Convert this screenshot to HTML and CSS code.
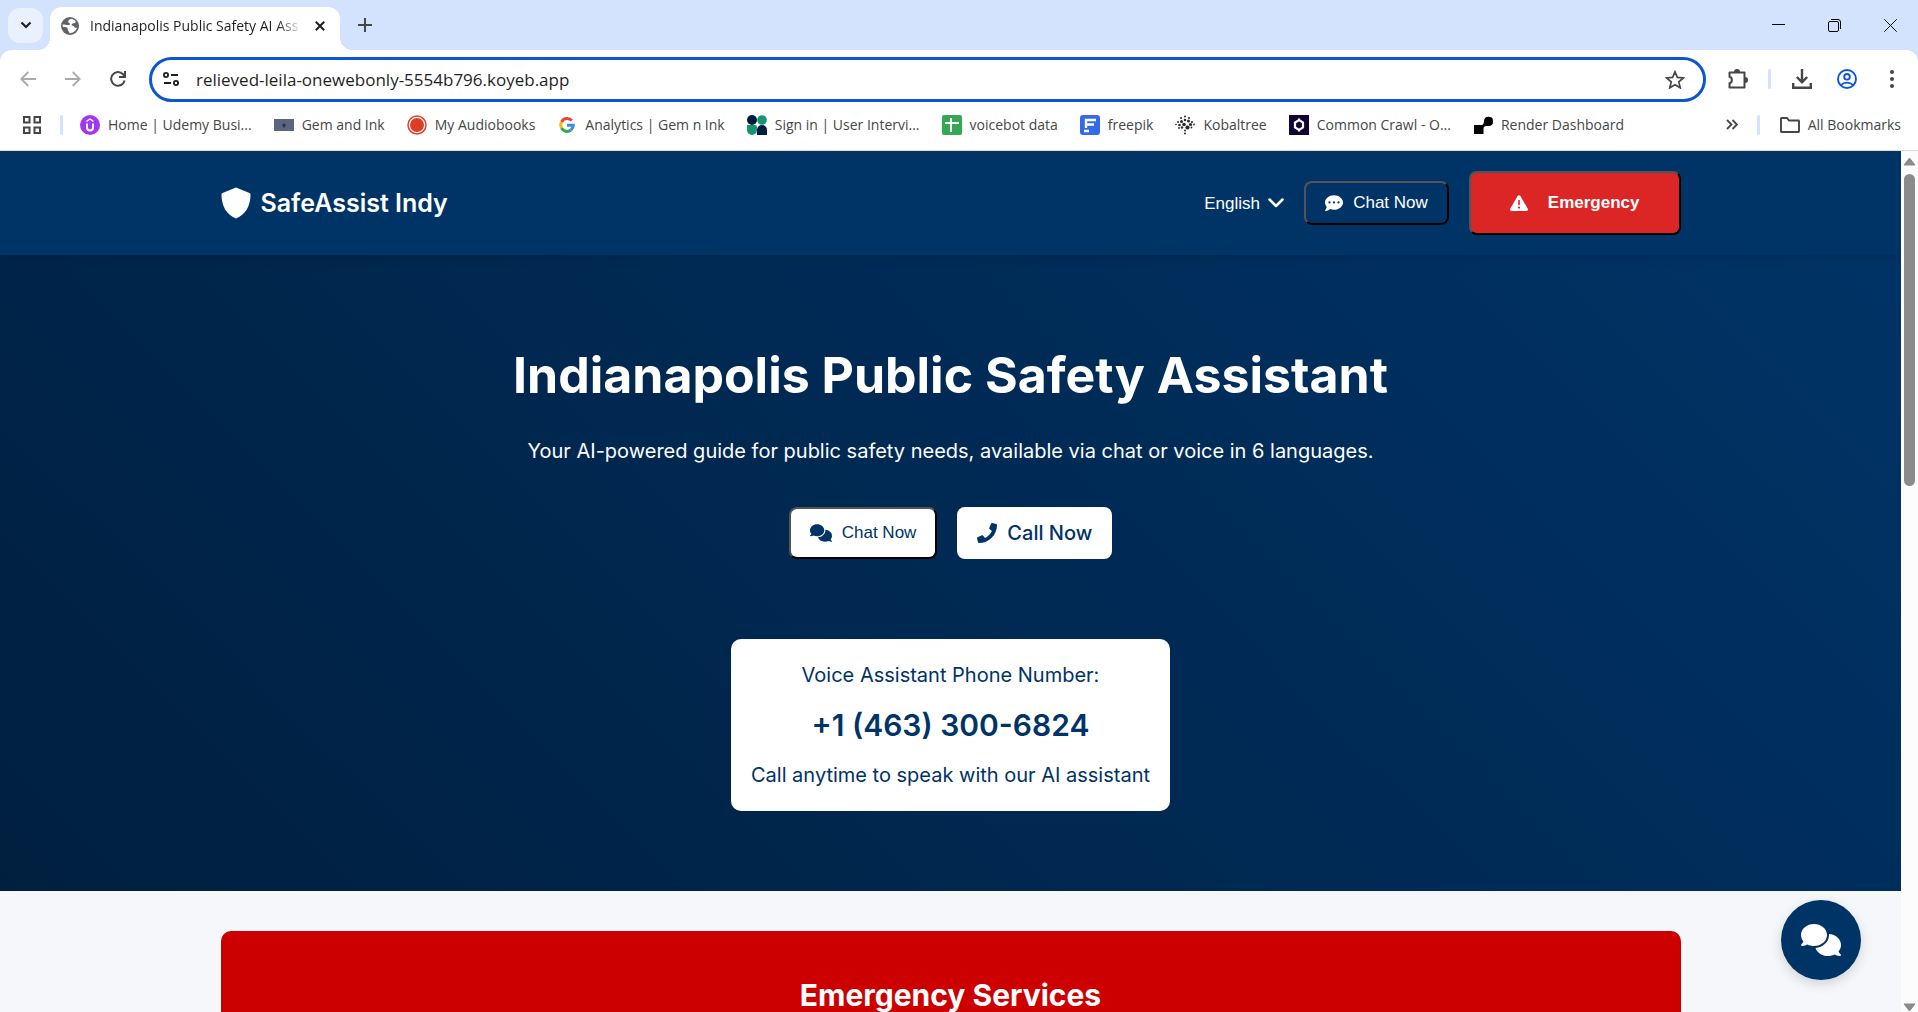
FILE: index.html
```html
<!DOCTYPE html>
<html lang="en">
<head>
  <meta charset="UTF-8">
  <title>Indianapolis Public Safety AI Assistant</title>
  <link rel="stylesheet" href="styles.css">
</head>
<body>

  <!-- Tab strip -->
  <div class="tabstrip">
    <button class="tab-search" aria-label="Search tabs">
      <svg width="12" height="8" viewBox="0 0 12 8"><path d="M1.500 1.500L6 6l4.500-4.500" fill="none" stroke="#1f1f1f" stroke-width="2.200"/></svg>
    </button>
    <div class="tab">
      <svg class="tab-icon" width="18" height="18" viewBox="0 0 18 18">
        <circle cx="9" cy="9" r="9" fill="#5f6368"/>
        <path d="M10.500 1.800c-2 .6-3.300 1.200-3.300 2.700 0 1.700 2 1.300 2 2.600 0 1-1.500.9-2.700 1-1.700.1-2.300-.6-4.700-.8-.2 1.200-.1 2 .1 2.800 1.400 0 3.600-.2 4.500.8 1 1.100-.2 2 .8 3 .6.600 1.200.8 1.200 2.300 4 0 6.700-2.400 7.500-5.400-1.200.4-2.200 0-2.700-1-.6-1.300-2.400-.8-2.600-2 0-1.200 1.200-1.500 2.600-1.600 1.200-.1 1.500-1 1.400-2-1-1.200-2.300-2-4.100-2.400z" fill="#fff"/>
      </svg>
      <span class="tab-title">Indianapolis Public Safety AI Ass</span>
      <button class="tab-close" aria-label="Close tab">
        <svg width="10" height="10" viewBox="0 0 10 10"><path d="M.8.8l8.400 8.400M9.200.8L.8 9.200" stroke="#1f1f1f" stroke-width="2"/></svg>
      </button>
    </div>
    <button class="new-tab" aria-label="New tab">
      <svg width="14" height="14" viewBox="0 0 14 14"><path d="M7 0v14M0 7h14" stroke="#444746" stroke-width="2"/></svg>
    </button>
    <div class="window-buttons">
      <button aria-label="Minimize"><svg width="13" height="13" viewBox="0 0 13 13"><path d="M0 5.500h13" stroke="#000"/></svg></button>
      <button aria-label="Restore"><svg width="13" height="13" viewBox="0 0 13 13" fill="none" stroke="#000"><rect x=".5" y="2.500" width="10" height="10" rx="1.500"/><path d="M3 .5h7a2.500 2.500 0 0 1 2.500 2.500v7"/></svg></button>
      <button aria-label="Close"><svg width="13" height="13" viewBox="0 0 13 13"><path d="M.3.3l12.400 12.400M12.700.3L.3 12.700" stroke="#000"/></svg></button>
    </div>
  </div>

  <!-- Toolbar -->
  <div class="toolbar">
    <button class="tool" aria-label="Back"><svg width="16" height="16" viewBox="0 0 16 16" fill="none" stroke="#ababab" stroke-width="1.800"><path d="M16 8H1.500M8.300 1L1.300 8l7 7"/></svg></button>
    <button class="tool" aria-label="Forward"><svg width="16" height="16" viewBox="0 0 16 16" fill="none" stroke="#ababab" stroke-width="1.800"><path d="M0 8h14.500M7.700 1l7 7-7 7"/></svg></button>
    <button class="tool" aria-label="Reload"><svg width="16" height="16" viewBox="0 0 16 16" fill="none" stroke="#444746" stroke-width="2"><path d="M14.600 9.500A6.800 6.800 0 1 1 13 3.300l1.700 1.900M15 0v6H9"/></svg></button>
    <form class="omnibox">
      <svg width="16" height="14" viewBox="0 0 16 14" fill="none" stroke="#1f1f1f" stroke-width="1.800"><circle cx="3" cy="3" r="2.100"/><path d="M8 3h7M1 11h7"/><circle cx="13" cy="11" r="2.100"/></svg>
      <input type="text" aria-label="Address" value="relieved-leila-onewebonly-5554b796.koyeb.app">
      <button type="button" class="star" aria-label="Bookmark this tab"><svg width="20" height="19" viewBox="0 0 20 19"><path d="M10 1.800l2.400 5.600 6 .5-4.600 4 1.400 5.900L10 14.700l-5.200 3.100 1.400-5.900-4.600-4 6-.5z" fill="none" stroke="#444746" stroke-width="1.700"/></svg></button>
    </form>
    <button class="tool extensions" aria-label="Extensions"><svg width="22" height="22" viewBox="0 0 22 22"><path d="M2.500 4.500h15v15h-15v-4.300c3.200-.4 3.200-6 0-6.400z" fill="none" stroke="#444746" stroke-width="2" stroke-linejoin="round"/><path d="M7 4a3 3 0 0 1 6 0zM18 9a3 3 0 0 1 0 6z" fill="#444746"/></svg></button>
    <span class="divider"></span>
    <button class="tool" aria-label="Downloads"><svg width="20" height="20" viewBox="0 0 20 20" fill="none" stroke="#444746" stroke-width="2.400"><path d="M10 0v12.500M4.800 8l5.200 5.200L15.200 8M1.200 14v4.800h17.600V14"/></svg></button>
    <button class="tool" aria-label="Profile"><svg width="20" height="20" viewBox="0 0 20 20" fill="none" stroke="#0b57d0" stroke-width="1.900"><circle cx="10" cy="10" r="9"/><circle cx="10" cy="7.800" r="2.800"/><path d="M3.800 16.200c3.400-3.400 9-3.400 12.400 0"/></svg></button>
    <button class="tool" aria-label="Menu"><svg width="4" height="18" viewBox="0 0 4 18" fill="#444746"><circle cx="2" cy="2" r="2"/><circle cx="2" cy="9" r="2"/><circle cx="2" cy="16" r="2"/></svg></button>
  </div>

  <!-- Bookmarks bar -->
  <div class="bookmarks">
    <button class="apps" aria-label="Apps"><svg width="18" height="18" viewBox="0 0 18 18" fill="none" stroke="#444746" stroke-width="2"><path d="M1 1h5.500v5.500H1zM11.500 1H17v5.500h-5.500zM1 11.500h5.500V17H1zM11.500 11.500H17V17h-5.500z"/></svg></button>
    <span class="divider"></span>
    <nav class="bookmark-list">
      <a href="#"><svg width="20" height="20" viewBox="0 0 20 20"><circle cx="10" cy="10" r="10" fill="#a435f0"/><path d="M6.500 6.300L10 4l3.500 2.300" fill="none" stroke="#fff" stroke-width="1.400"/><path d="M7 8.500v4a3 3 0 0 0 6 0v-4" fill="none" stroke="#fff" stroke-width="2"/></svg>Home | Udemy Busi...</a>
      <a href="#"><svg width="20" height="20" viewBox="0 0 20 20"><path d="M0 4h20v12H0z" fill="#5c6580"/><path d="M10 8l2 2-2 3-2-3z" fill="#2c3450"/></svg>Gem and Ink</a>
      <a href="#"><svg width="20" height="20" viewBox="0 0 20 20"><circle cx="10" cy="10" r="9" fill="#fff" stroke="#d9442d" stroke-width="1.500"/><circle cx="10" cy="10" r="7" fill="#dc3e24"/></svg>My Audiobooks</a>
      <a href="#"><svg width="20" height="20" viewBox="0 0 20 20" fill="none" stroke-width="3"><path d="M14.800 5.500A6.300 6.300 0 0 0 4.500 7" stroke="#ea4335"/><path d="M4.500 7a6.500 6.500 0 0 0 0 6" stroke="#fbbc05"/><path d="M4.500 13a6.300 6.300 0 0 0 9.500 2" stroke="#34a853"/><path d="M14 15a6.500 6.500 0 0 0 2.300-4.700H10" stroke="#4285f4"/></svg>Analytics | Gem n Ink</a>
      <a href="#"><svg width="20" height="20" viewBox="0 0 20 20"><circle cx="5" cy="5" r="5" fill="#001c3d"/><circle cx="15" cy="5" r="4.800" fill="#159570"/><path d="M0 10h8q2 0 2 2v3a5 5 0 0 1-10 0z" fill="#159570"/><path d="M10 20v-5a5 5 0 0 1 10 0v5z" fill="#001c3d"/></svg>Sign in | User Intervi...</a>
      <a href="#"><svg width="20" height="20" viewBox="0 0 20 20"><rect width="20" height="20" rx="2" fill="#34a853"/><path d="M9 3v14M3 8h14" stroke="#fff" stroke-width="2"/></svg>voicebot data</a>
      <a href="#"><svg width="20" height="20" viewBox="0 0 20 20"><rect width="20" height="20" rx="3" fill="#336aea"/><path d="M6 13V5h10M6 9.500h8M4 16h5" fill="none" stroke="#fff" stroke-width="2.400"/></svg>freepik</a>
      <a href="#"><svg width="20" height="20" viewBox="0 0 20 20" fill="#2a2a2a"><circle cx="10" cy="1.500" r="1"/><circle cx="6" cy="3" r="1"/><circle cx="14" cy="3" r="1"/><circle cx="10" cy="5" r="1.300"/><circle cx="6.500" cy="6.500" r="1.500"/><circle cx="13.500" cy="6" r="1.500"/><circle cx="3" cy="7" r="1"/><circle cx="17" cy="7" r="1.100"/><circle cx="1" cy="9.500" r=".8"/><circle cx="4.500" cy="10" r="1.300"/><circle cx="9" cy="9.500" r="1.800"/><circle cx="15.500" cy="9.500" r="1.600"/><circle cx="19" cy="9.500" r=".9"/><circle cx="7" cy="12.500" r="1.200"/><circle cx="12.500" cy="12.500" r="2.100"/><circle cx="4" cy="13" r=".9"/><circle cx="16.500" cy="12.500" r=".9"/><circle cx="10" cy="15.500" r="1"/><circle cx="10" cy="18.500" r="1"/></svg>Kobaltree</a>
      <a href="#"><svg width="20" height="20" viewBox="0 0 20 20"><path d="M0 0h20v20H0z" fill="#110333"/><path d="M10 5l4 2.500v5L10 15l-4-2.500v-5z" fill="none" stroke="#fff" stroke-width="2.200"/><path d="M10 3v3M10 14v3" stroke="#fff"/></svg>Common Crawl - O...</a>
      <a href="#"><svg width="20" height="20" viewBox="0 0 20 20"><path d="M1 19v-9h7.500c2 0 2.300-1.700 2.500-4a4.600 4.600 0 1 1 5 5h-2.500c-2.300 0-3 1-3 3.200V19z"/></svg>Render Dashboard</a>
    </nav>
    <button class="more" aria-label="More bookmarks"><svg width="12" height="11" viewBox="0 0 12 11"><path d="M1 1l4.500 4.500L1 10M6.500 1L11 5.500 6.500 10" fill="none" stroke="#444746" stroke-width="1.800"/></svg></button>
    <span class="divider"></span>
    <a class="all-bookmarks" href="#"><svg width="20" height="16" viewBox="0 0 20 16"><path d="M1 1.500q0-.5.5-.5H7l2 2.500h9.500q.5 0 .5.500v10.500q0 .5-.5.500h-17q-.5 0-.5-.5z" fill="none" stroke="#444746" stroke-width="1.900"/></svg>All Bookmarks</a>
  </div>

  <!-- Web page -->
  <div class="viewport">
    <div class="page">
      <header class="header">
        <div class="container header-inner">
          <a class="logo" href="#">
            <svg width="30" height="32" viewBox="0 0 30 32"><path d="M15 .5L28.500 6q1 .4 1 1.500C29.500 18.500 25 27.500 15 31.500 5 27.500.5 18.500.5 7.500q0-1.100 1-1.500z" fill="#fff"/></svg>
            SafeAssist Indy
          </a>
          <div class="header-actions">
            <label class="language">
              <select aria-label="Language"><option>English</option></select>
              <svg width="16" height="10" viewBox="0 0 16 10"><path d="M1.500 1.500L8 8l6.500-6.500" fill="none" stroke="#fff" stroke-width="2.500" stroke-linecap="round" stroke-linejoin="round"/></svg>
            </label>
            <button class="btn btn-chat">
              <svg width="18" height="18" viewBox="0 0 512 512" fill="currentColor"><path d="M256 448c141.400 0 256-93.100 256-208S397.400 32 256 32S0 125.100 0 240c0 45.100 17.700 86.800 47.700 120.900c-1.900 24.500-11.400 46.300-21.400 62.900c-5.500 9.200-11.100 16.600-15.200 21.600c-2.100 2.500-3.700 4.400-4.900 5.700c-.6 .6-1 1.100-1.300 1.400l-.3 .3c-4.600 4.600-5.900 11.400-3.400 17.400c2.500 6 8.300 9.900 14.800 9.900c28.700 0 57.600-8.900 81.600-19.300c22.900-10 42.400-21.900 54.300-30.600c31.800 11.500 67 17.900 104.100 17.900zM128 208a32 32 0 1 1 0 64 32 32 0 1 1 0-64zm128 0a32 32 0 1 1 0 64 32 32 0 1 1 0-64zm96 32a32 32 0 1 1 64 0 32 32 0 1 1 -64 0z"/></svg>
              Chat Now
            </button>
            <button class="btn btn-emergency">
              <svg width="18" height="18" viewBox="0 0 512 512" fill="currentColor"><path d="M256 32c14.200 0 27.300 7.500 34.500 19.800l216 368c7.300 12.400 7.300 27.700 .2 40.100S486.300 480 472 480L40 480c-14.300 0-27.600-7.700-34.700-20.100s-7-27.800 .2-40.100l216-368C228.700 39.500 241.800 32 256 32zm0 128c-13.300 0-24 10.700-24 24l0 112c0 13.300 10.700 24 24 24s24-10.700 24-24l0-112c0-13.300-10.700-24-24-24zm32 224a32 32 0 1 0 -64 0 32 32 0 1 0 64 0z"/></svg>
              Emergency
            </button>
          </div>
        </div>
      </header>

      <section class="hero">
        <h1>Indianapolis Public Safety Assistant</h1>
        <p class="hero-text">Your AI-powered guide for public safety needs, available via chat or voice in 6 languages.</p>
        <div class="hero-buttons">
          <button class="btn btn-light">
            <svg width="22" height="18" viewBox="0 0 640 512" fill="currentColor"><path d="M208 352c114.900 0 208-78.800 208-176S322.900 0 208 0S0 78.800 0 176c0 38.600 14.700 74.300 39.600 103.400c-3.500 9.400-8.700 17.700-14.200 24.700c-4.800 6.200-9.700 11-13.300 14.300c-1.800 1.600-3.300 2.900-4.300 3.700c-.5 .4-.9 .7-1.100 .8l-.2 .2C1 327.200-1.400 334.400 .8 340.900S9.100 352 16 352c21.800 0 43.800-5.600 62.100-12.500c9.200-3.500 17.800-7.400 25.300-11.400C134.100 343.300 169.800 352 208 352zM448 176c0 112.300-99.100 196.900-216.500 207C255.800 457.400 336.400 512 432 512c38.200 0 73.900-8.700 104.700-23.900c7.500 4 16 7.900 25.200 11.400c18.300 6.900 40.300 12.500 62.100 12.500c6.900 0 13.100-4.500 15.200-11.100c2.100-6.600-.2-13.800-5.800-17.900l-.2-.2c-.2-.2-.6-.4-1.100-.8c-1-.8-2.500-2-4.300-3.700c-3.600-3.300-8.500-8.100-13.300-14.300c-5.500-7-10.700-15.400-14.200-24.700c24.900-29 39.600-64.700 39.600-103.400c0-92.800-84.900-168.900-192.600-175.500c.4 5.100 .6 10.300 .6 15.500z"/></svg>
            Chat Now
          </button>
          <a class="btn-call" href="#">
            <svg width="20" height="20" viewBox="0 0 512 512" fill="currentColor"><path d="M493.400 24.600l-104-24c-11.300-2.600-22.900 3.300-27.500 13.900l-48 112c-4.200 9.800-1.400 21.300 6.900 28l60.600 49.600c-36 76.700-98.900 140.500-177.200 177.200l-49.600-60.600c-6.800-8.300-18.200-11.100-28-6.900l-112 48C3.900 366.500-2 378.100.6 389.400l24 104C27.100 504.200 36.700 512 48 512c256.100 0 464-207.500 464-464 0-11.200-7.700-20.900-18.600-23.400z"/></svg>
            Call Now
          </a>
        </div>
        <div class="phone-card">
          <p>Voice Assistant Phone Number:</p>
          <p class="phone-number">+1 (463) 300-6824</p>
          <p>Call anytime to speak with our AI assistant</p>
        </div>
      </section>

      <main class="container main">
        <section class="emergency">
          <h2>Emergency Services</h2>
        </section>
      </main>
    </div>

    <!-- Scrollbar -->
    <div class="scrollbar">
      <svg width="13" height="9" viewBox="0 0 13 9"><path d="M6.500 1L12 8H1z" fill="#8b8b8b" stroke="#8b8b8b" stroke-linejoin="round"/></svg>
      <div class="track"><div class="thumb"></div></div>
      <svg width="13" height="9" viewBox="0 0 13 9"><path d="M6.500 8L12 1H1z" fill="#8b8b8b" stroke="#8b8b8b" stroke-linejoin="round"/></svg>
    </div>

    <button class="chat-float" aria-label="Open chat">
      <svg width="40" height="32" viewBox="0 0 640 512" fill="currentColor"><path d="M208 352c114.900 0 208-78.800 208-176S322.900 0 208 0S0 78.800 0 176c0 38.600 14.700 74.300 39.600 103.400c-3.500 9.400-8.700 17.700-14.200 24.700c-4.800 6.200-9.700 11-13.300 14.300c-1.800 1.600-3.300 2.900-4.300 3.700c-.5 .4-.9 .7-1.100 .8l-.2 .2C1 327.200-1.400 334.400 .8 340.900S9.100 352 16 352c21.800 0 43.800-5.600 62.100-12.500c9.200-3.500 17.800-7.400 25.300-11.400C134.100 343.300 169.800 352 208 352zM448 176c0 112.300-99.100 196.900-216.500 207C255.800 457.400 336.400 512 432 512c38.200 0 73.900-8.700 104.700-23.900c7.500 4 16 7.900 25.200 11.400c18.300 6.900 40.300 12.500 62.100 12.500c6.900 0 13.100-4.500 15.200-11.100c2.100-6.600-.2-13.800-5.800-17.900l-.2-.2c-.2-.2-.6-.4-1.100-.8c-1-.8-2.500-2-4.300-3.700c-3.600-3.300-8.500-8.100-13.300-14.300c-5.500-7-10.700-15.400-14.200-24.700c24.900-29 39.600-64.700 39.600-103.400c0-92.800-84.900-168.900-192.600-175.500c.4 5.100 .6 10.300 .6 15.500z"/></svg>
    </button>
  </div>

</body>
</html>
```
FILE: styles.css
```css
* {
  box-sizing: border-box;
}

body {
  margin: 0;
  height: 100vh;
  display: flex;
  flex-direction: column;
  overflow: hidden;
  background-color: white;
  font-family: Inter, sans-serif;
}

svg {
  flex-shrink: 0;
}

/* Tab strip */
.tabstrip {
  background-color: #d3e3fd;
  height: 50px;
  padding-left: 8px;
  display: flex;
  align-items: center;
  font-family: "Open Sans", "Noto Sans", sans-serif;
}

.tabstrip button,
.tool,
.star,
.apps,
.more {
  background: none;
  border: none;
  padding: 0;
  display: flex;
  align-items: center;
  justify-content: center;
}

.tabstrip .tab-search {
  width: 35px;
  height: 35px;
  border-radius: 12px;
  background-color: #e9f1fe;
}

.tab {
  position: relative;
  align-self: flex-end;
  width: 290px;
  height: 43px;
  margin-left: 7px;
  padding: 0 15px 6px 11px;
  background-color: white;
  border-radius: 12px 12px 0 0;
  display: flex;
  align-items: center;
}

.tab::before,
.tab::after {
  content: "";
  position: absolute;
  bottom: 0;
  width: 12px;
  height: 12px;
}

.tab::before {
  right: 100%;
  background: radial-gradient(circle at 0 0, transparent 12px, white 12px);
}

.tab::after {
  left: 100%;
  background: radial-gradient(circle at 100% 0, transparent 12px, white 12px);
}

.tab-title {
  flex: 1;
  margin: 0 8px 0 11px;
  white-space: nowrap;
  font-size: 14px;
  color: #1f1f1f;
  -webkit-mask-image: linear-gradient(to right, black 86%, transparent 98%);
  mask-image: linear-gradient(to right, black 86%, transparent 98%);
}

.new-tab {
  margin-left: 18px;
}

.window-buttons {
  margin-left: auto;
  display: flex;
}

.window-buttons button {
  width: 56px;
  height: 46px;
}

/* Toolbar */
.toolbar {
  height: 58px;
  padding: 0 4px 0 5px;
  display: flex;
  align-items: center;
  border-radius: 12px 12px 0 0;
  background-color: white;
  box-shadow: 0 -12px 0 #d3e3fd;
  clip-path: inset(0);
}

.tool {
  width: 45px;
  height: 45px;
}

.omnibox {
  flex: 1;
  height: 45px;
  margin: 0 9px 0 9px;
  padding: 0 18px 0 11px;
  border: 3px solid #0b57d0;
  border-radius: 23px;
  display: flex;
  align-items: center;
}

.omnibox input {
  flex: 1;
  min-width: 0;
  margin-left: 17px;
  padding: 0;
  border: none;
  outline: none;
  font-family: "Open Sans", "Noto Sans", sans-serif;
  font-size: 17px;
  color: #1f1f1f;
}

.divider {
  width: 3px;
  height: 20px;
  border-radius: 2px;
  background-color: #d3e3fd;
}

.toolbar .divider {
  margin: 0 8px;
}

/* Bookmarks bar */
.bookmarks {
  height: 43px;
  padding: 0 17px 9px 23px;
  border-bottom: 1px solid #dadce0;
  display: flex;
  align-items: center;
  font-family: "Open Sans", "Noto Sans", sans-serif;
  font-size: 14px;
  color: #444746;
}

.bookmarks > .divider {
  margin-left: 19px;
}

.bookmark-list {
  display: flex;
  gap: 22px;
  margin-left: 17px;
}

.bookmarks a {
  display: flex;
  align-items: center;
  gap: 8px;
  color: #444746;
  text-decoration: none;
  white-space: nowrap;
}

.more {
  margin-left: auto;
}

.all-bookmarks {
  margin-left: 20px;
}

/* Page area */
.viewport {
  position: relative;
  flex: 1;
  min-height: 0;
  display: flex;
  overflow: hidden;
}

.page {
  flex: 1;
  overflow: hidden;
  background-color: #f5f7fa;
}

.container {
  max-width: 1500px;
  margin: 0 auto;
  padding: 0 20px;
}

.header {
  position: relative;
  padding: 20px 0;
  background-color: #003366;
  box-shadow: 0 2px 10px rgba(0,0,0,0.1);
}

.header-inner {
  display: flex;
  align-items: center;
  justify-content: space-between;
}

.logo {
  display: flex;
  align-items: center;
  gap: 10px;
  color: white;
  font-size: 25px;
  font-weight: 600;
  text-decoration: none;
}

.header-actions {
  display: flex;
  align-items: center;
  gap: 20px;
  font-family: "Liberation Sans", Arial, sans-serif;
}

.language {
  display: flex;
  align-items: center;
  gap: 8px;
}

.language select {
  appearance: none;
  border: none;
  padding: 0;
  background: none;
  color: white;
  font-family: inherit;
  font-size: 17px;
}

.btn {
  display: flex;
  align-items: center;
  gap: 10px;
  border: 2px outset black;
  border-radius: 8px;
  font-family: "Liberation Sans", Arial, sans-serif;
  font-size: 17px;
}

.btn-chat {
  height: 44px;
  padding: 0 19px;
  background-color: #003366;
  color: white;
}

.btn-emergency {
  height: 64px;
  padding: 0 39px;
  gap: 20px;
  background-color: #dc2626;
  color: white;
  font-weight: bold;
}

/* Hero */
.hero {
  padding: 80px 20px;
  background: linear-gradient(45deg, #001f3f, #003366);
  color: white;
  display: flex;
  flex-direction: column;
  align-items: center;
}

.hero h1 {
  margin: 0;
  font-size: 50px;
  line-height: 80px;
}

.hero-text {
  margin: 20px 0 40px;
  font-size: 20px;
  line-height: 32px;
}

.hero-buttons {
  display: flex;
  gap: 20px;
}

.btn-light {
  height: 52px;
  padding: 0 19px;
  background-color: white;
  color: #003366;
}

.btn-call {
  height: 52px;
  padding: 0 20px;
  display: flex;
  align-items: center;
  gap: 10px;
  border-radius: 8px;
  background-color: white;
  color: #003366;
  font-size: 20px;
  font-weight: 500;
  text-decoration: none;
}

.phone-card {
  margin-top: 80px;
  padding: 20px;
  border-radius: 10px;
  background-color: white;
  color: #003366;
  text-align: center;
  font-size: 20px;
  line-height: 32px;
}

.phone-card p {
  margin: 0;
}

.phone-card .phone-number {
  margin: 10px 0;
  font-size: 30px;
  font-weight: 600;
  line-height: 48px;
}

/* Emergency section */
.main {
  padding-top: 40px;
}

.emergency {
  padding: 40px;
  border-radius: 10px;
  background-color: #cc0000;
  color: white;
  text-align: center;
}

.emergency h2 {
  margin: 0;
  font-size: 30px;
  line-height: 48px;
}

/* Scrollbar */
.scrollbar {
  width: 17px;
  padding: 6px 0 0;
  background-color: #fcfcfc;
  display: flex;
  flex-direction: column;
  align-items: center;
}

.track {
  flex: 1;
  margin: 8px 0;
}

.thumb {
  width: 11px;
  height: 38%;
  border-radius: 6px;
  background-color: #8b8b8b;
}

/* Floating chat button */
.chat-float {
  position: absolute;
  right: 57px;
  bottom: 32px;
  width: 80px;
  height: 80px;
  border: none;
  border-radius: 50%;
  background-color: #003366;
  color: white;
  display: flex;
  align-items: center;
  justify-content: center;
  box-shadow: 0 4px 12px rgba(0,0,0,0.15);
}
```
